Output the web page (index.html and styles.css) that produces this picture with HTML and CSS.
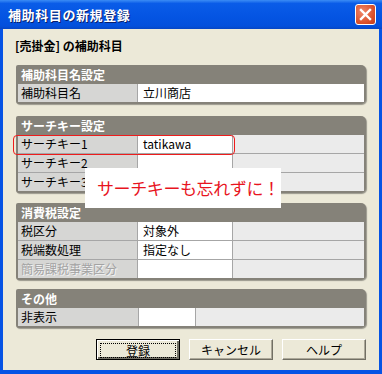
FILE: index.html
```html
<!doctype html>
<html lang="ja">
<head>
  <meta charset="UTF-8">
  <title>補助科目の新規登録</title>
  <link rel="stylesheet" href="styles.css">
</head>
<body>
  <div class="window">
    <div class="titlebar">
      <span class="title">補助科目の新規登録</span>
      <span class="close-btn">
        <svg width="21" height="21" viewBox="0 0 21 21">
          <path d="M6 6 L15 15 M15 6 L6 15" stroke="#fff" stroke-width="2.4" stroke-linecap="square"/>
        </svg>
      </span>
    </div>
    <div class="client">
      <div class="subtitle">[売掛金] の補助科目</div>

      <div class="group">
        <div class="group-head">補助科目名設定</div>
        <div class="rows rows-wide">
          <div class="row"><span class="label">補助科目名</span><span class="value">立川商店</span></div>
        </div>
      </div>

      <div class="group">
        <div class="group-head">サーチキー設定</div>
        <div class="rows">
          <div class="row"><span class="label">サーチキー1</span><span class="value">tatikawa</span><span class="blank"></span></div>
          <div class="row"><span class="label">サーチキー2</span><span class="value"></span><span class="blank"></span></div>
          <div class="row"><span class="label">サーチキー3</span><span class="value"></span><span class="blank"></span></div>
          <div class="mark"></div>
        </div>
      </div>

      <div class="group">
        <div class="group-head">消費税設定</div>
        <div class="rows">
          <div class="row"><span class="label">税区分</span><span class="value">対象外</span><span class="blank"></span></div>
          <div class="row"><span class="label">税端数処理</span><span class="value">指定なし</span><span class="blank"></span></div>
          <div class="row"><span class="label label-off">簡易課税事業区分</span><span class="value"></span><span class="blank"></span></div>
        </div>
      </div>

      <div class="group">
        <div class="group-head">その他</div>
        <div class="rows rows-short">
          <div class="row"><span class="label">非表示</span><span class="value"></span><span class="blank"></span></div>
        </div>
      </div>

      <div class="buttons">
        <button type="button" class="btn btn-default"><span class="focus">登録</span></button>
        <button type="button" class="btn">キャンセル</button>
        <button type="button" class="btn">ヘルプ</button>
      </div>

      <!-- 吹き出し注記 -->
      <div class="callout">サーチキーも忘れずに！</div>
    </div>
  </div>
</body>
</html>
```

FILE: styles.css
```css
body {
  margin: 0;
  font-family: "Noto Sans CJK JP", "Liberation Sans", sans-serif;
  font-size: 12px;
}

.window {
  width: 382px;
  height: 374px;
  display: flex;
  flex-direction: column;
  background: #0653e4;
  box-sizing: border-box;
}

.titlebar {
  height: 29px;
  flex: none;
  display: flex;
  align-items: center;
  justify-content: space-between;
  padding: 0 6px 0 8px;
  background: linear-gradient(#3b8cf5 0%, #0a5ce8 12%, #0454e2 60%, #0350dc 90%, #0646c4 100%);
}

.title {
  color: #fff;
  font-weight: bold;
  font-size: 13px;
  letter-spacing: 0.6px;
  text-shadow: 1px 1px 0 #0a1e6a;
}

.close-btn {
  width: 21px;
  height: 21px;
  box-sizing: border-box;
  border: 1px solid #fff;
  border-radius: 3px;
  background: radial-gradient(circle at 35% 35%, #f0876a, #d84c26 70%, #c13e1c);
  display: flex;
}

.close-btn svg {
  margin: -1px;
}

.client {
  position: relative;
  flex: 1;
  margin: 0 3px 4px;
  background: #ece9d8;
  padding: 10px 0 0 13px;
}

.subtitle {
  font-weight: bold;
  line-height: 14px;
  padding-left: 0;
  margin-left: -1px;
}

.group {
  width: 350px;
  margin-top: 10px;
  background: #858279;
  border-radius: 2px 5px 5px 3px;
  padding: 0 2px 2px;
  box-sizing: border-box;
  box-shadow: 1px 1px 1px rgb(0 0 0 / 35%);
}

.group:nth-of-type(2) {
  margin-top: 12px;
}

.group:nth-of-type(3) {
  margin-top: 12px;
}

.group:nth-of-type(5) {
  margin-top: 9px;
}

.group-head {
  height: 19px;
  line-height: 19px;
  color: #fff;
  font-weight: bold;
  padding-left: 3px;
}

.rows {
  position: relative;
  display: grid;
  row-gap: 1px;
  background: #a6a6a6;
}

.row {
  display: grid;
  grid-template-columns: 119px 94px 1fr;
  column-gap: 1px;
  height: 18px;
  line-height: 18px;
}

.rows-wide .row {
  grid-template-columns: 119px 1fr;
}

.rows-short .row {
  grid-template-columns: 120px 56px 1fr;
}

.label {
  background: #d6d6d4;
  padding-left: 3px;
  white-space: nowrap;
}

.label-off {
  color: #a3a3a3;
  text-shadow: 1px 1px 0 #f2f2f2;
}

.value {
  background: #fff;
  padding-left: 5px;
}

.blank {
  background: #ebebeb;
}

/* 入力欄を囲む赤枠 */
.mark {
  position: absolute;
  left: -5px;
  top: 0;
  width: 220px;
  height: 18px;
  border: 1px solid #ee1c1c;
  border-radius: 4px;
  pointer-events: none;
}

.buttons {
  display: flex;
  gap: 8px;
  margin: 11px 0 0 80px;
}

.btn {
  width: 84px;
  height: 21px;
  padding: 0;
  font: inherit;
  color: #000;
  background: #ece9d8;
  border: 1px solid;
  border-color: #fff #716f64 #716f64 #fff;
  box-shadow: inset -1px -1px 0 #aca899;
}

.btn + .btn {
  margin-left: 1px;
}

.btn-default {
  border: 1px solid #000;
  box-shadow: inset 1px 1px 0 #fff, inset -2px -2px 0 #716f64;
  padding: 3px;
}

.btn-default .focus {
  display: block;
  height: 13px;
  line-height: 13px;
  border: 1px dotted #000;
}

.callout {
  position: absolute;
  left: 82px;
  top: 139px;
  width: 196px;
  height: 40px;
  background: #fff;
  color: #e8141e;
  font-size: 17px;
  line-height: 40px;
  padding-left: 12px;
  box-sizing: border-box;
  letter-spacing: -0.4px;
}
```
